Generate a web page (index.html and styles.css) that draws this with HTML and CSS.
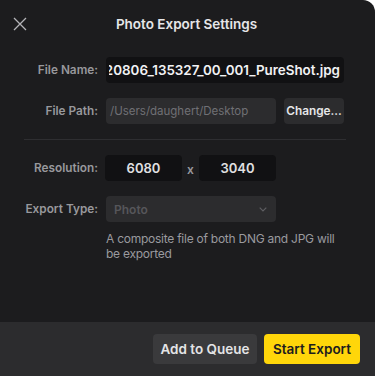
FILE: index.html
```html
<!DOCTYPE html>
<html>
<head>
<meta charset="utf-8">
<link rel="stylesheet" href="styles.css">
</head>
<body>
<div class="panel">
  <div class="header">
    <button class="close" aria-label="Close">
      <svg width="14" height="14" viewBox="0 0 14 14"><path d="M1 1L13 13M13 1L1 13" stroke="#b4b4b8" stroke-width="1.3" fill="none"/></svg>
    </button>
    <div class="title">Photo Export Settings</div>
    <div></div>
  </div>
  <div class="form">
    <div class="row">
      <div class="label">File Name:</div>
      <div class="field name"><div class="clip"><span>220806_135327_00_001_PureShot.jpg</span></div></div>
    </div>
    <div class="row">
      <div class="label">File Path:</div>
      <div class="pathgroup">
        <div class="field path">/Users/daughert/Desktop</div>
        <div class="btn change">Change...</div>
      </div>
    </div>
    <div class="divider"></div>
    <div class="row">
      <div class="label">Resolution:</div>
      <div class="resgroup">
        <div class="field res">6080</div>
        <div class="times">x</div>
        <div class="field res">3040</div>
      </div>
    </div>
    <div class="row">
      <div class="label">Export Type:</div>
      <div class="field select">
        <span>Photo</span>
        <svg width="8" height="5" viewBox="0 0 8 5"><path d="M0.7 0.7L4 4L7.3 0.7" stroke="#5e5e62" stroke-width="1.2" fill="none"/></svg>
      </div>
    </div>
    <div class="row desc-row">
      <div></div>
      <div class="desc">A composite file of both DNG and JPG will be exported</div>
    </div>
  </div>
  <div class="footer">
    <div class="btn queue">Add to Queue</div>
    <div class="btn start">Start Export</div>
  </div>
</div>
</body>
</html>
```
FILE: styles.css
```css
html, body {
  margin: 0;
  padding: 0;
  background: #ffffff;
}
body {
  font-family: Inter, "Noto Sans", sans-serif;
}
.panel {
  width: 375px;
  height: 376px;
  background: #1c1c1e;
  border-top-right-radius: 12px;
  display: flex;
  flex-direction: column;
  overflow: hidden;
}
.header {
  height: 48px;
  display: grid;
  grid-template-columns: 40px 1fr 40px;
  align-items: center;
}
.close {
  background: none;
  border: none;
  padding: 0;
  margin-left: 13px;
  width: 14px;
  height: 14px;
  display: flex;
}
.title {
  text-align: center;
  color: #e6e6e8;
  font-weight: 600;
  font-size: 13.5px;
  margin-left: -2px;
}
.form {
  padding: 9px 31px 0 0;
  flex: 1;
}
.row {
  display: grid;
  grid-template-columns: 98px minmax(0, 1fr);
  column-gap: 8px;
  align-items: center;
  height: 26px;
  margin-bottom: 15px;
}
.label {
  text-align: right;
  color: #98989c;
  font-weight: 600;
  font-size: 11.8px;
}
.field {
  height: 26px;
  border-radius: 4px;
  box-sizing: border-box;
  display: flex;
  align-items: center;
  font-size: 13px;
}
.name {
  background: #111113;
  color: #f2f2f4;
  font-weight: 600;
  font-size: 13.4px;
  padding: 0 4px 0 3px;
  min-width: 0;
}
.clip {
  flex: 1;
  min-width: 0;
  overflow: hidden;
  display: flex;
  justify-content: flex-end;
  white-space: nowrap;
}
.clip span {
  flex-shrink: 0;
}
.pathgroup {
  display: flex;
  gap: 8px;
}
.path {
  width: 170px;
  background: #2c2c2e;
  color: #707075;
  padding-left: 4px;
  font-size: 11.5px;
}
.btn {
  border-radius: 4px;
  display: flex;
  align-items: center;
  justify-content: center;
  font-weight: 600;
  box-sizing: border-box;
}
.change {
  width: 60px;
  height: 26px;
  background: #2c2c2e;
  color: #e6e6e8;
  font-size: 11.8px;
}
.divider {
  height: 1px;
  background: #2e2e31;
  margin: 0 -2px 15px 24px;
}
.resgroup {
  display: flex;
  align-items: center;
  margin-left: -1px;
}
.res {
  width: 77px;
  background: #111113;
  color: #e0e0e2;
  font-weight: 600;
  justify-content: center;
}
.times {
  width: 17px;
  text-align: center;
  color: #98989c;
  font-weight: 600;
  font-size: 12px;
  padding-top: 2px;
}
.select {
  width: 170px;
  background: #2c2c2e;
  color: #56565a;
  font-weight: 600;
  font-size: 12px;
  padding: 0 9px 0 8px;
  justify-content: space-between;
}
.desc-row {
  height: auto;
  align-items: start;
  margin-top: -6px;
}
.desc {
  color: #9a9a9e;
  font-size: 12px;
  line-height: 15px;
  letter-spacing: -0.25px;
  width: 240px;
}
.footer {
  height: 54px;
  background: #2c2c2e;
  display: flex;
  justify-content: flex-end;
  align-items: center;
  gap: 7px;
  padding-right: 15px;
}
.queue {
  width: 104px;
  height: 30px;
  background: #3a3a3c;
  color: #e4e4e6;
  font-size: 13.5px;
}
.start {
  width: 96px;
  height: 30px;
  background: #ffd60a;
  color: #1c1c1e;
  font-size: 13.5px;
}
```
